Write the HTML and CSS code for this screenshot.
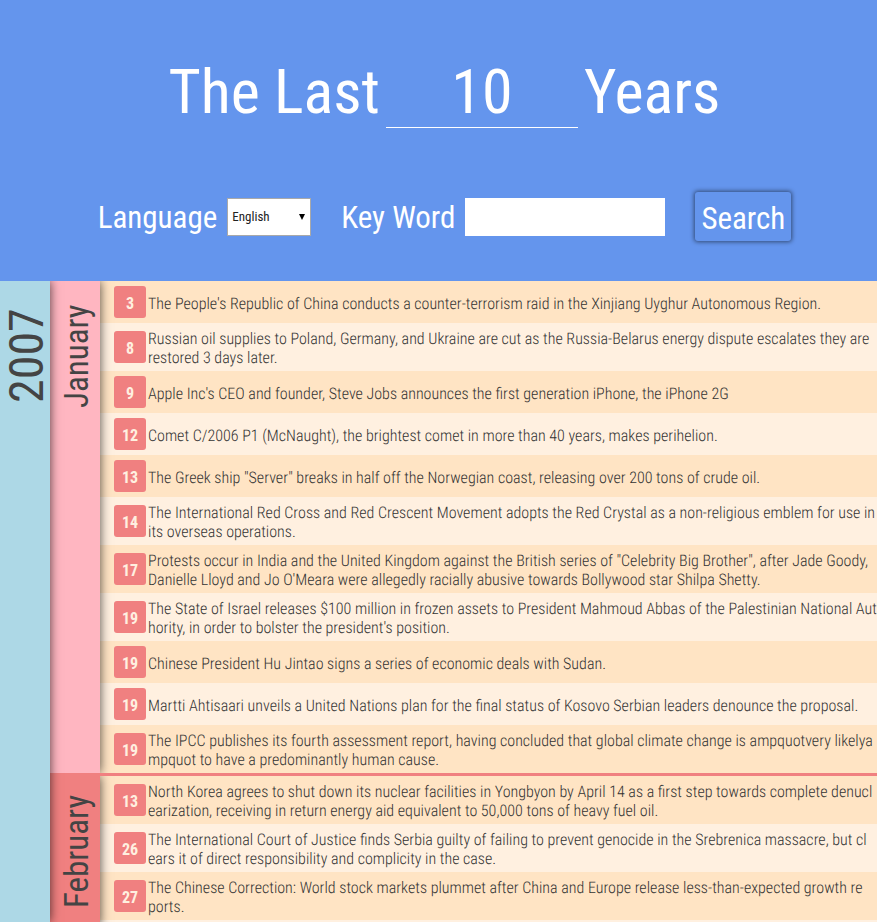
FILE: index.html
```html
<!DOCTYPE html>
<html lang="en">
<head>
<meta charset="utf-8">
<meta name="viewport" content="width=device-width, initial-scale=1">
<title>The Last 10 Years</title>
<link rel="stylesheet" href="styles.css">
</head>
<body>
<header class="top">
  <h1 class="title">
    <label for="years">The Last</label>
    <input class="years" id="years" type="text" value="10">
    <span>Years</span>
  </h1>
  <form class="filters">
    <div class="field">
      <label for="language">Language</label>
      <span class="picker">
        <select id="language"><option>English</option></select>
      </span>
    </div>
    <div class="field">
      <label for="keyword">Key Word</label>
      <input class="keyword" id="keyword" type="text">
    </div>
    <button class="search" type="button">Search</button>
  </form>
</header>
<main class="year">
  <h2 class="side year-name"><span>2007</span></h2>
  <div class="months">
    <section class="month">
      <h3 class="side month-name"><span>January</span></h3>
      <ol class="events">
        <li><b>3</b><p>The People's Republic of China conducts a counter-terrorism raid in the Xinjiang Uyghur Autonomous Region.</p></li>
        <li><b>8</b><p>Russian oil supplies to Poland, Germany, and Ukraine are cut as the Russia-Belarus energy dispute escalates they are<br>restored 3 days later.</p></li>
        <li><b>9</b><p>Apple Inc's CEO and founder, Steve Jobs announces the first generation iPhone, the iPhone 2G</p></li>
        <li><b>12</b><p>Comet C/2006 P1 (McNaught), the brightest comet in more than 40 years, makes perihelion.</p></li>
        <li><b>13</b><p>The Greek ship "Server" breaks in half off the Norwegian coast, releasing over 200 tons of crude oil.</p></li>
        <li><b>14</b><p>The International Red Cross and Red Crescent Movement adopts the Red Crystal as a non-religious emblem for use in<br>its overseas operations.</p></li>
        <li><b>17</b><p>Protests occur in India and the United Kingdom against the British series of "Celebrity Big Brother", after Jade Goody,<br>Danielle Lloyd and Jo O'Meara were allegedly racially abusive towards Bollywood star Shilpa Shetty.</p></li>
        <li><b>19</b><p>The State of Israel releases $100 million in frozen assets to President Mahmoud Abbas of the Palestinian National Aut<br>hority, in order to bolster the president's position.</p></li>
        <li><b>19</b><p>Chinese President Hu Jintao signs a series of economic deals with Sudan.</p></li>
        <li><b>19</b><p>Martti Ahtisaari unveils a United Nations plan for the final status of Kosovo Serbian leaders denounce the proposal.</p></li>
        <li><b>19</b><p>The IPCC publishes its fourth assessment report, having concluded that global climate change is ampquotvery likelya<br>mpquot to have a predominantly human cause.</p></li>
      </ol>
    </section>
    <section class="month">
      <h3 class="side month-name"><span>February</span></h3>
      <ol class="events">
        <li><b>13</b><p>North Korea agrees to shut down its nuclear facilities in Yongbyon by April 14 as a first step towards complete denucl<br>earization, receiving in return energy aid equivalent to 50,000 tons of heavy fuel oil.</p></li>
        <li><b>26</b><p>The International Court of Justice finds Serbia guilty of failing to prevent genocide in the Srebrenica massacre, but cl<br>ears it of direct responsibility and complicity in the case.</p></li>
        <li><b>27</b><p>The Chinese Correction: World stock markets plummet after China and Europe release less-than-expected growth re<br>ports.</p></li>
      </ol>
    </section>
  </div>
</main>
</body>
</html>
```
FILE: styles.css
```css
* { box-sizing: border-box; }

body {
  margin: 0;
  height: 100vh;
  display: flex;
  flex-direction: column;
  overflow: hidden;
  color: #444;
  font-family: "Roboto Condensed", "Liberation Sans Narrow", "Liberation Sans", sans-serif;
  font-size: 16px;
  line-height: 19px;
}

h1, h2, h3, p, ol { margin: 0; padding: 0; font-weight: 400; }

input, select, button { font-family: inherit; margin: 0; }

.top {
  flex: none;
  padding: 56px 0 40px 12px;
  background: cornflowerblue;
  color: #fff;
}

.title {
  display: flex;
  justify-content: center;
  gap: 6px;
  font-size: 62px;
  line-height: 72px;
}

.years {
  width: 192px;
  height: 72px;
  padding: 0;
  border: 0;
  border-bottom: 1px solid #fff;
  background: transparent;
  color: #fff;
  font-size: 62px;
  text-align: center;
}

.filters {
  display: flex;
  justify-content: center;
  align-items: center;
  gap: 30px;
  margin-top: 64px;
  font-size: 31px;
  line-height: 38px;
}

.field { display: flex; align-items: center; gap: 10px; }

.field label { padding-top: 3px; }

.picker { position: relative; display: flex; }

.picker::after {
  content: "";
  position: absolute;
  right: 6px;
  top: 16px;
  border: 3px solid transparent;
  border-top: 6px solid #000;
  border-bottom: 0;
  pointer-events: none;
}

.picker select {
  appearance: none;
  width: 84px;
  height: 38px;
  padding: 0 4px;
  border: 1px solid #a9a9a9;
  border-radius: 0;
  background: #fff;
  color: #222;
  font-size: 13px;
}

.keyword {
  width: 200px;
  height: 38px;
  padding: 0 8px;
  border: 0;
  background: #fff;
  font-size: 20px;
}

.search {
  height: 49px;
  padding: 3px 6px 0;
  border: 0;
  border-radius: 3px;
  background: cornflowerblue;
  box-shadow: 0 0 4px 1px rgba(0, 0, 0, .5);
  color: #fff;
  font-size: 31px;
}

.year {
  flex: 1;
  min-height: 0;
  display: flex;
  overflow: hidden;
}

.side {
  flex: none;
  position: relative;
  width: 50px;
  z-index: 1;
  box-shadow: 0 0 10px rgba(0, 0, 0, .7);
}

.side span {
  display: flex;
  align-items: center;
  justify-content: center;
  width: 50px;
  height: 150px;
  padding-right: 4px;
  writing-mode: vertical-rl;
  transform: rotate(180deg);
  line-height: 46px;
}

.year-name { z-index: 2; background: lightblue; font-size: 48px; }

.month-name { background: lightpink; font-size: 33px; }

.months { flex: 1; min-width: 0; }

.month { display: flex; overflow: hidden; }

.month + .month { border-top: 3px solid lightcoral; }

.month + .month .month-name { background: lightcoral; }

.events {
  flex: 1;
  min-width: 0;
  background: #fff0e0;
  list-style: none;
}

.events li {
  display: flex;
  align-items: center;
  gap: 2px;
  padding: 5px 0 5px 14px;
}

.events li:nth-child(odd) { background: #ffe4c4; }

.events b {
  flex: none;
  width: 32px;
  height: 32px;
  border-radius: 3px;
  background: lightcoral;
  color: #fff0e0;
  line-height: 35px;
  text-align: center;
}

.events p {
  margin: 1px 0 -1px;
  color: #333;
  font-weight: 300;
  white-space: nowrap;
  text-rendering: geometricPrecision;
}
```
